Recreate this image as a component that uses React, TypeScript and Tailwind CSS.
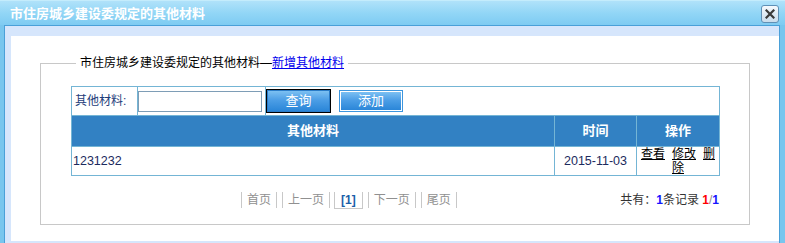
export default function App() {
  return (
    <div className="w-[785px] h-[243px] overflow-hidden flex flex-col bg-[#78c6ee] font-['Liberation_Sans','Noto_Sans_CJK_SC',sans-serif] text-[12px]">
      {/* Title bar */}
      <div className="h-[25px] shrink-0 flex items-center justify-between pl-[10px] pr-[6px] bg-[linear-gradient(#b0e2fa,#92d6f6_50%,#7ecbf2)] border-t border-[#c4ecfc]">
        <span className="text-white font-bold text-[13px] leading-none">市住房城乡建设委规定的其他材料</span>
        <button className="w-[18px] h-[18px] mt-[1px] rounded-[3px] border border-[#5f90b6] bg-[linear-gradient(#f6fafd,#c8dcec)] flex items-center justify-center">
          <svg width="10" height="10" viewBox="0 0 10 10">
            <path d="M1.5 1.5 L8.5 8.5 M8.5 1.5 L1.5 8.5" stroke="#3a3a3a" strokeWidth="2.2" strokeLinecap="square" />
          </svg>
        </button>
      </div>
      {/* Body frame */}
      <div className="flex-1 flex pl-[4px] pr-[5px] min-h-0">
        <div className="flex-1 border-l border-t border-r border-[#4aa0d8] bg-[#d6e6fc] pl-[6px] pt-[10px] pb-[2px] flex flex-col">
          <div className="flex-1 bg-white px-[29px] pt-[19px]">
            <fieldset className="border border-[#c8c8c8] pb-[15px]">
              <legend className="ml-[35px] px-[4px] leading-[16px] text-black">
                市住房城乡建设委规定的其他材料—<a href="#" className="text-[#0000ee] underline">新增其他材料</a>
              </legend>
              <div className="ml-[30px] mt-[15px] w-[649px] border border-[#74b5d5]">
                {/* Search row */}
                <div className="h-[29px] flex border-b border-[#74b5d5]">
                  <div className="w-[66px] border-r border-[#74b5d5] flex items-center pl-[3px] text-[#1e3d7a]">其他材料:</div>
                  <div className="w-[128px] border-r border-[#74b5d5] flex items-center">
                    <input className="w-[124px] h-[21px] border border-[#7e9db6] outline-none" />
                  </div>
                  <div className="flex-1 flex items-center">
                    <button className="w-[65px] h-[24px] border border-black bg-[#1c6cbc] p-0">
                      <span className="block w-full h-full border border-[#2a7cc8] bg-[linear-gradient(#7cc0f2,#4c9ee6_45%,#2a86d8)] text-white text-[13px] leading-[20px]">查询</span>
                    </button>
                    <button className="ml-[8px] w-[64px] h-[22px] border border-[#3d96de] bg-white p-[1px]">
                      <span className="block w-full h-full bg-[linear-gradient(#7cc0f2,#4c9ee6_45%,#2a86d8)] text-white text-[13px] leading-[18px]">添加</span>
                    </button>
                  </div>
                </div>
                {/* Header */}
                <div className="h-[31px] flex bg-[#3281c3] border-b border-[#74b5d5] text-white font-bold text-[13px]">
                  <div className="w-[483px] border-r border-[#74b5d5] flex items-center justify-center">其他材料</div>
                  <div className="w-[82px] border-r border-[#74b5d5] flex items-center justify-center">时间</div>
                  <div className="flex-1 flex items-center justify-center">操作</div>
                </div>
                {/* Data row */}
                <div className="h-[28px] flex">
                  <div className="w-[483px] border-r border-[#74b5d5] flex items-center pl-[1px] text-[#1c2b5e] text-[12.5px]">1231232</div>
                  <div className="w-[82px] border-r border-[#74b5d5] flex items-center justify-center text-[#1c2b5e] text-[12.5px]">2015-11-03</div>
                  <div className="flex-1 flex flex-col items-center leading-[14px] text-black">
                    <div className="whitespace-nowrap">
                      <a href="#" className="underline text-black">查看</a>
                      <a href="#" className="underline text-black ml-[7px]">修改</a>
                      <a href="#" className="underline text-black ml-[7px]">删</a>
                    </div>
                    <a href="#" className="underline text-black">除</a>
                  </div>
                </div>
              </div>
              {/* Pagination */}
              <div className="ml-[30px] mt-[15px] w-[649px] flex items-center">
                <div className="flex-1 flex pl-[170px] text-[#909090] leading-[16px]">
                  <span className="h-[16px] px-[5px] border-l border-r border-[#c8c8c8]">首页</span>
                  <span className="ml-[5px] h-[16px] px-[5px] border-l border-r border-[#c8c8c8]">上一页</span>
                  <span className="ml-[4px] h-[17px] px-[6px] border-l border-r border-b border-[#c8c8c8] text-[#1a5ea8] font-bold">[1]</span>
                  <span className="ml-[5px] h-[16px] px-[5px] border-l border-r border-[#c8c8c8]">下一页</span>
                  <span className="ml-[5px] h-[16px] px-[5px] border-l border-r border-[#c8c8c8]">尾页</span>
                </div>
                <div className="whitespace-nowrap pr-[1px] text-[#333]">
                  共有：<b className="text-[#1414ff]">1</b>条记录 <b className="text-[#ff0000]">1</b><span className="text-[#888]">/</span><b className="text-[#1414ff]">1</b>
                </div>
              </div>
            </fieldset>
          </div>
        </div>
      </div>
    </div>
  );
}
